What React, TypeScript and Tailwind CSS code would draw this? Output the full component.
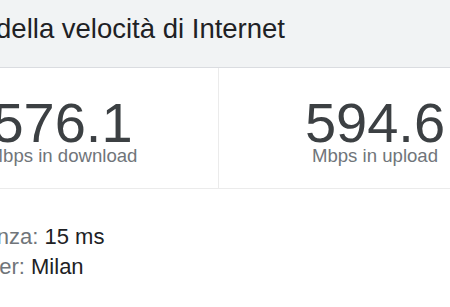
import React from "react";

const font = { fontFamily: '"Liberation Sans", Arial, sans-serif' };

export default function App() {
  return (
    <div className="w-[450px] h-[307px] overflow-hidden bg-white" style={font}>
      <div className="ml-[-93px] w-[624px]">
        <div className="h-[68px] bg-[#f1f3f4] border-b border-[#dadce0] pl-[31px] pt-[13px]">
          <div className="text-[27.5px] leading-[31px] text-[#202124] whitespace-nowrap">
            Test della velocità di Internet
          </div>
        </div>
        <div className="flex h-[121px] border-b border-[#ebebeb]">
          <div className="w-[312px] flex flex-col items-center pt-[32px] border-r border-[#ebebeb]">
            <div className="text-[56px] leading-[46px] text-[#3c4043]">576.1</div>
            <div className="text-[18.6px] leading-[20px] text-[#70757a] whitespace-nowrap">Mbps in download</div>
          </div>
          <div className="w-[312px] flex flex-col items-center pt-[32px]">
            <div className="text-[56px] leading-[46px] text-[#3c4043]">594.6</div>
            <div className="text-[18.6px] leading-[20px] text-[#70757a] whitespace-nowrap">Mbps in upload</div>
          </div>
        </div>
        <div className="pl-[47px] pt-[33px] text-[22px] leading-[30px]">
          <div className="whitespace-nowrap">
            <span className="text-[#70757a]">Latenza: </span>
            <span className="text-[#202124]">15 ms</span>
          </div>
          <div className="whitespace-nowrap">
            <span className="text-[#70757a]">Server: </span>
            <span className="text-[#202124]">Milan</span>
          </div>
        </div>
      </div>
    </div>
  );
}
